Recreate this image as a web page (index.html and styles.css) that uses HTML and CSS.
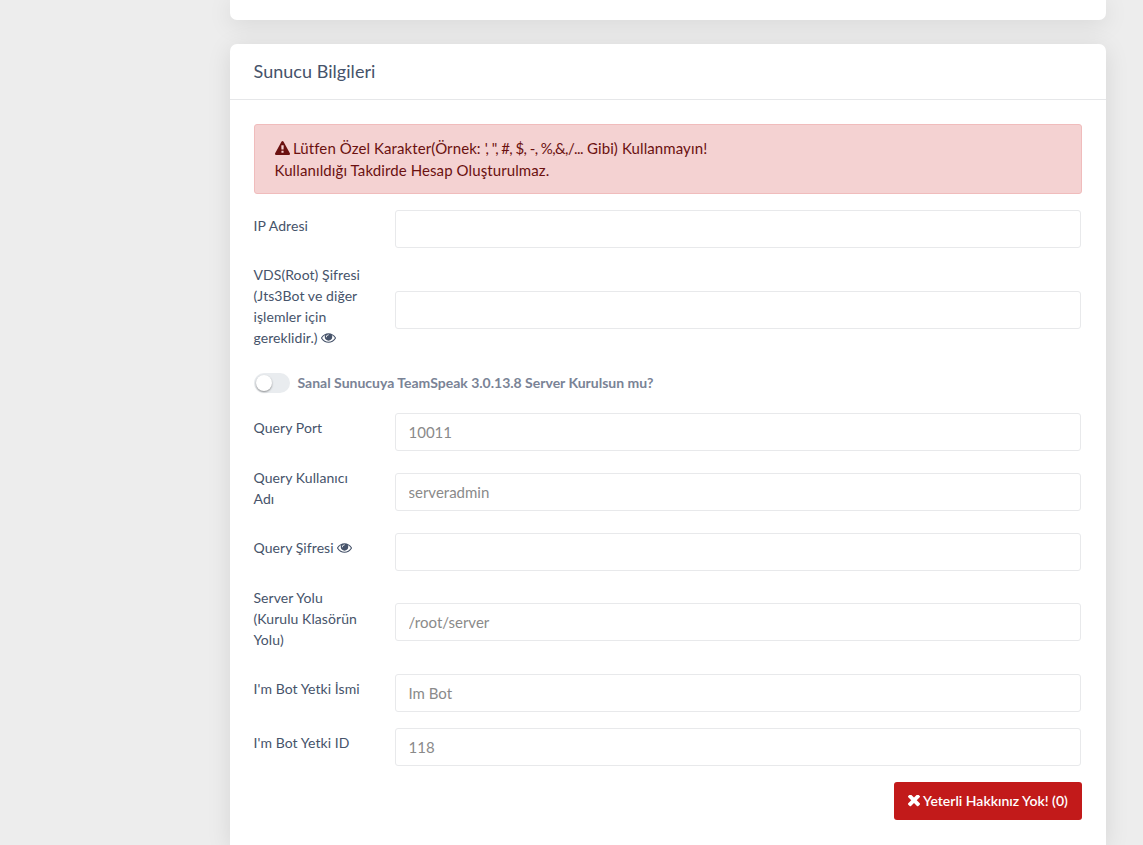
FILE: index.html
```html
<!DOCTYPE html>
<html lang="tr">

<head>
  <meta charset="UTF-8">
  <meta name="viewport" content="width=device-width, initial-scale=1.0">
  <title>Sunucu Bilgileri</title>
  <link rel="stylesheet" href="styles.css">
</head>

<body>
  <!-- Icon shapes -->
  <svg class="sprite" width="0" height="0">
    <symbol id="eye" viewBox="0 0 1792 1792">
      <path d="M1664 960q-152-236-381-353 61 104 61 225 0 185-131.500 316.500t-316.500 131.500-316.500-131.500-131.500-316.500q0-121 61-225-229 117-381 353 133 205 333.500 326.500t434.500 121.500 434.500-121.500 333.500-326.500zm-720-384q0-20-14-34t-34-14q-125 0-214.500 89.500t-89.500 214.500q0 20 14 34t34 14 34-14 14-34q0-86 61-147t147-61q20 0 34-14t14-34zm848 384q0 34-20 69-140 230-376.500 368.500t-499.500 138.500-499.500-139-376.500-368q-20-35-20-69t20-69q140-229 376.500-368t499.500-139 499.500 139 376.500 368q20 35 20 69z"/>
    </symbol>
    <symbol id="warning" viewBox="0 0 1792 1792">
      <path d="M1024 1375v-190q0-14-9.500-23.500t-22.500-9.500h-192q-13 0-22.500 9.500t-9.500 23.500v190q0 14 9.500 23.500t22.500 9.500h192q13 0 22.500-9.500t9.500-23.500zm-2-374l18-459q0-12-10-19-13-11-24-11h-220q-11 0-24 11-10 7-10 21l17 457q0 10 10 16.500t24 6.500h185q14 0 23.500-6.500t10.500-16.500zm-14-934l768 1408q35 63-2 126-17 29-46.500 46t-63.500 17h-1536q-34 0-63.500-17t-46.500-46q-37-63-2-126l768-1408q17-31 47-49t65-18 65 18 47 49z"/>
    </symbol>
    <symbol id="close" viewBox="110 302 1188 1188">
      <path d="M1298 1322q0 40-28 68l-136 136q-28 28-68 28t-68-28l-294-294-294 294q-28 28-68 28t-68-28l-136-136q-28-28-28-68t28-68l294-294-294-294q-28-28-28-68t28-68l136-136q28-28 68-28t68 28l294 294 294-294q28-28 68-28t68 28l136 136q28 28 28 68t-28 68l-294 294 294 294q28 28 28 68z" transform="translate(0 -132)"/>
    </symbol>
  </svg>

  <main class="content">
    <div class="card card-top"></div>

    <div class="card">
      <div class="card-header">
        <h3 class="card-title">Sunucu Bilgileri</h3>
      </div>
      <form class="card-body">
        <div class="alert">
          <div><svg class="icon icon-warning"><use href="#warning"/></svg> Lütfen Özel Karakter(Örnek: <span class="chars">', ", #, $, -, %,&amp;,/...</span> Gibi) Kullanmayın!</div>
          <div>Kullanıldığı Takdirde Hesap Oluşturulmaz.</div>
        </div>

        <div class="form-row row-ip">
          <label for="ip">IP Adresi</label>
          <input type="text" id="ip">
        </div>
        <div class="form-row row-root">
          <label for="root-pass">VDS(Root) Şifresi (Jts3Bot ve diğer işlemler için gereklidir.) <svg class="icon icon-eye"><use href="#eye"/></svg></label>
          <input type="password" id="root-pass">
        </div>

        <label class="switch">
          <input type="checkbox" class="switch-input">
          <span class="switch-indicator"></span>
          <span class="switch-text">Sanal Sunucuya TeamSpeak 3.0.13.8 Server Kurulsun mu?</span>
        </label>

        <div class="form-row">
          <label for="port">Query Port</label>
          <input type="text" id="port" placeholder="10011">
        </div>
        <div class="form-row row-user">
          <label for="user">Query Kullanıcı Adı</label>
          <input type="text" id="user" placeholder="serveradmin">
        </div>
        <div class="form-row row-pass">
          <label for="pass">Query Şifresi <svg class="icon icon-eye"><use href="#eye"/></svg></label>
          <input type="password" id="pass">
        </div>
        <div class="form-row row-path">
          <label for="path">Server Yolu (Kurulu Klasörün Yolu)</label>
          <input type="text" id="path" placeholder="/root/server">
        </div>
        <div class="form-row">
          <label for="bot-name">I'm Bot Yetki İsmi</label>
          <input type="text" id="bot-name" placeholder="Im Bot">
        </div>
        <div class="form-row">
          <label for="bot-id">I'm Bot Yetki ID</label>
          <input type="text" id="bot-id" placeholder="118">
        </div>

        <div class="form-footer">
          <button type="button" class="btn"><svg class="icon icon-close"><use href="#close"/></svg> Yeterli Hakkınız Yok! (0)</button>
        </div>
      </form>
    </div>
  </main>
</body>

</html>
```

FILE: styles.css
```css
* {
  box-sizing: border-box;
}

body {
  font-family: Lato, "Open Sans", sans-serif;
  font-size: 15px;
  line-height: 1.5;
  color: #495057;
  background-color: #ededed;
  margin: 0;
}

.sprite {
  position: absolute;
}

.content {
  display: flex;
  flex-direction: column;
  height: 100vh;
  margin-left: 230px;
  width: 876px;
}

.card {
  flex: 1;
  background-color: white;
  border-radius: 7px 7px 0 0;
  box-shadow: 0 4px 25px 0 rgba(0, 0, 0, 0.1);
}

.card-top {
  flex: none;
  height: 20px;
  border-radius: 0 0 7px 7px;
  margin-bottom: 24px;
}

.card-header {
  display: flex;
  align-items: center;
  height: 56px;
  padding: 0 23.5px 2px;
  border-bottom: 1px solid #e6e7e9;
}

.card-title {
  margin: 0;
  font-size: 18px;
  font-weight: 400;
  line-height: 22px;
  letter-spacing: 0.04px;
  color: #46536a;
}

.card-body {
  padding: 24px 24px 0;
}

.alert {
  height: 70px;
  margin-bottom: 16px;
  padding: 12px 19.5px;
  line-height: 22px;
  letter-spacing: 0.1px;
  color: #6b1110;
  background-color: #f4d2d2;
  border: 1px solid #f0bcbc;
  border-radius: 3px;
}

.chars {
  letter-spacing: -0.58px;
}

.icon {
  fill: currentColor;
}

.icon-warning {
  width: 15px;
  height: 15px;
  margin-right: -0.5px;
  vertical-align: -2px;
}

.icon-eye {
  width: 15px;
  height: 15px;
  vertical-align: -2px;
}

.icon-close {
  width: 12px;
  height: 12px;
  vertical-align: -1px;
}

.form-row {
  display: flex;
  align-items: flex-start;
  margin-bottom: 16px;
}

.form-row label {
  width: 113px;
  margin-left: -0.5px;
  margin-right: 28.5px;
  padding-top: 4px;
  font-size: 14px;
  line-height: 21px;
  letter-spacing: 0.07px;
  color: #46536a;
}

.form-row input {
  width: 686px;
  height: 38px;
  padding: 6px 12.5px;
  font-family: inherit;
  font-size: 15px;
  color: #495057;
  background-color: white;
  border: 1px solid #e8e9eb;
  border-radius: 3px;
}

.form-row input::placeholder {
  color: #8a8a8a;
}

.row-ip {
  margin-bottom: 11px;
}

.form-row.row-ip label,
.form-row.row-root label {
  padding-top: 5px;
}

.row-root {
  height: 90px;
  margin-bottom: 24px;
}

.row-root input {
  margin-top: 32px;
}

.row-user {
  margin-top: -4px;
  margin-bottom: 22px;
}

.row-user input {
  margin-top: 10px;
}

.row-pass {
  margin-bottom: 12px;
}

.row-path {
  height: 68px;
  margin-bottom: 23px;
}

.row-path input {
  margin-top: 20px;
}

.switch {
  display: flex;
  align-items: center;
  height: 20px;
  margin-bottom: 20px;
}

.switch-input {
  display: none;
}

.switch-indicator {
  width: 36px;
  height: 20px;
  padding: 2px;
  background-color: #e9ecef;
  border-radius: 10px;
}

.switch-indicator::before {
  content: "";
  display: block;
  width: 16px;
  height: 16px;
  background-color: white;
  border-radius: 50%;
  box-shadow: 0 1px 2px rgba(0, 0, 0, 0.4);
}

.switch-text {
  margin-left: 7.5px;
  font-size: 14px;
  font-weight: 700;
  line-height: 20px;
  color: #7a8396;
}

.form-footer {
  display: flex;
  justify-content: flex-end;
}

.btn {
  width: 188px;
  height: 38px;
  padding: 0 0 2px;
  font-family: inherit;
  font-size: 14px;
  font-weight: 600;
  color: white;
  background-color: #c21a1a;
  border: none;
  border-radius: 3px;
  cursor: pointer;
}
```
